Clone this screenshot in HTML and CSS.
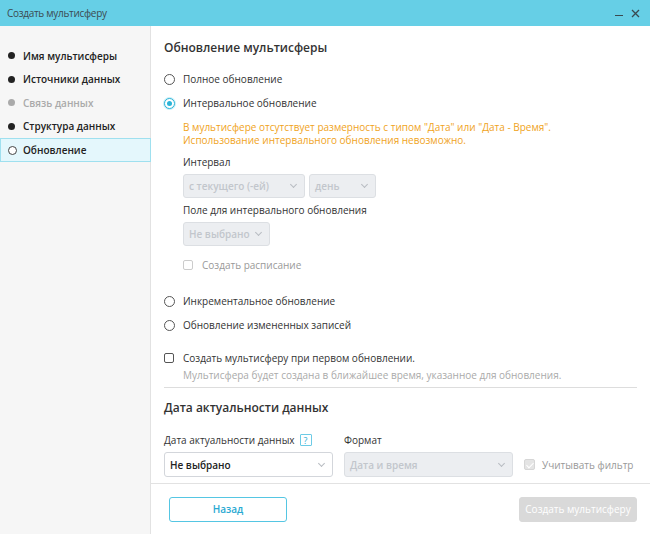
FILE: index.html
```html
<!DOCTYPE html>
<html lang="ru">
<head>
    <meta charset="UTF-8">
    <title>Создать мультисферу</title>
    <link rel="stylesheet" href="styles.css">
</head>
<body>
<div class="window">
    <div class="titlebar">
        <span class="title">Создать мультисферу</span>
        <div class="win-buttons">
            <span class="win-min"></span>
            <svg class="win-close" width="9" height="9" viewBox="0 0 9 9"><path d="M1 1L8 8M8 1L1 8" stroke="#3a4a50" stroke-width="1.3"/></svg>
        </div>
    </div>

    <div class="layout">
        <!-- Steps -->
        <ul class="steps">
            <li class="step">Имя мультисферы</li>
            <li class="step">Источники данных</li>
            <li class="step disabled">Связь данных</li>
            <li class="step">Структура данных</li>
            <li class="step active">Обновление</li>
        </ul>

        <div class="main">
            <div class="content">
                <h2>Обновление мультисферы</h2>

                <div class="radio-row"><span class="radio"></span>Полное обновление</div>
                <div class="radio-row"><span class="radio checked"></span>Интервальное обновление</div>

                <div class="sub">
                    <p class="warning">В мультисфере отсутствует размерность с типом "Дата" или "Дата - Время".<br>Использование интервального обновления невозможно.</p>

                    <div class="field-label first">Интервал</div>
                    <div class="select-row">
                        <div class="select disabled w-122">с текущего (-ей)<span class="chev"></span></div>
                        <div class="select disabled w-67">день<span class="chev"></span></div>
                    </div>

                    <div class="field-label">Поле для интервального обновления</div>
                    <div class="select disabled w-87">Не выбрано<span class="chev"></span></div>

                    <div class="check-row muted"><span class="checkbox disabled"></span>Создать расписание</div>
                </div>

                <div class="radio-row gap-top"><span class="radio"></span>Инкрементальное обновление</div>
                <div class="radio-row"><span class="radio"></span>Обновление измененных записей</div>

                <div class="check-row create"><span class="checkbox"></span>Создать мультисферу при первом обновлении.</div>
                <div class="hint">Мультисфера будет создана в ближайшее время, указанное для обновления.</div>

                <hr>

                <h2 class="second">Дата актуальности данных</h2>

                <div class="date-grid">
                    <div class="col">
                        <div class="field-label">Дата актуальности данных <span class="help">?</span></div>
                        <div class="select w-169">Не выбрано<span class="chev"></span></div>
                    </div>
                    <div class="col">
                        <div class="field-label">Формат</div>
                        <div class="select disabled w-169">Дата и время<span class="chev"></span></div>
                    </div>
                    <div class="check-row muted filter"><span class="checkbox checked-disabled"></span>Учитывать фильтр</div>
                </div>
            </div>

            <div class="footer">
                <button class="btn btn-back">Назад</button>
                <button class="btn btn-create" disabled>Создать мультисферу</button>
            </div>
        </div>
    </div>
</div>
</body>
</html>
```

FILE: styles.css
```css
* {
    box-sizing: border-box;
    margin: 0;
    padding: 0;
}

body {
    font-family: "Open Sans", "Noto Sans", sans-serif;
    font-size: 10px;
    color: #333;
    background: #fff;
}

.window {
    width: 650px;
    height: 534px;
    display: flex;
    flex-direction: column;
    overflow: hidden;
}

.titlebar {
    flex-shrink: 0;
    height: 26px;
    background: #66cfe6;
    display: flex;
    align-items: center;
    justify-content: space-between;
    padding: 0 10px 0 7px;
}

.title {
    font-size: 10px;
    letter-spacing: -0.3px;
    color: #3c4a50;
}

.win-buttons {
    display: flex;
    align-items: center;
    gap: 8px;
}

.win-min {
    width: 8px;
    height: 1px;
    background: #3a4a50;
    margin-top: 5px;
}

.layout {
    flex: 1;
    display: flex;
    min-height: 0;
}

/* Steps */
.steps {
    width: 151px;
    flex-shrink: 0;
    background: #f6f6f6;
    border-right: 1px solid #e2e2e2;
    list-style: none;
    padding-top: 18px;
}

.step {
    height: 23.5px;
    display: flex;
    align-items: center;
    padding-left: 23px;
    position: relative;
    font-weight: 600;
    color: #222;
}

.step::before {
    content: "";
    position: absolute;
    left: 8px;
    top: 50%;
    width: 7px;
    height: 7px;
    margin-top: -3.5px;
    border-radius: 50%;
    background: #222;
}

.step.disabled {
    color: #aaa;
}

.step.disabled::before {
    background: #aaa;
}

.step.active {
    background: #e4f7fc;
    border: 1px solid #9fe0ef;
    margin-right: -1px;
    padding-left: 22px;
}

.step.active::before {
    left: 7px;
    background: #fff;
    border: 1px solid #444;
}

/* Main */
.main {
    flex: 1;
    display: flex;
    flex-direction: column;
}

.content {
    flex: 1;
    padding: 12px 13px 0 13px;
}

h2 {
    font-size: 12px;
    font-weight: 600;
    line-height: 20px;
    color: #333;
}

h2.second {
    margin-top: 10px;
}

.radio-row {
    height: 24px;
    display: flex;
    align-items: center;
}

h2 + .radio-row {
    margin-top: 9px;
}

.radio-row.gap-top {
    margin-top: 16px;
}

.radio {
    width: 11px;
    height: 11px;
    border: 1px solid #555;
    border-radius: 50%;
    margin-right: 8px;
    background: #fff;
    position: relative;
}

.radio.checked {
    border-color: #2bb4d8;
    box-shadow: 0 0 0 1px #c8eef7;
}

.radio.checked::after {
    content: "";
    position: absolute;
    left: 2px;
    top: 2px;
    width: 5px;
    height: 5px;
    border-radius: 50%;
    background: #2bb4d8;
}

.sub {
    padding-left: 19px;
}

.warning {
    color: #f0a31c;
    line-height: 12.5px;
    margin-top: 6px;
}

.field-label {
    line-height: 16px;
    display: flex;
    align-items: center;
    gap: 5px;
    margin-top: 4px;
    margin-bottom: 4px;
}

.field-label.first {
    margin-top: 8px;
}

.select-row {
    display: flex;
    gap: 4px;
}

.select {
    height: 24px;
    border: 1px solid #d3d6db;
    border-radius: 3px;
    background: #fff;
    display: flex;
    align-items: center;
    justify-content: space-between;
    padding: 0 8px 0 5px;
    font-weight: 600;
    color: #222;
    white-space: nowrap;
}

.select.disabled {
    background: #eceef1;
    border-color: #dcdfe3;
    color: #c2c6cc;
}

.chev {
    width: 5px;
    height: 5px;
    border-right: 1px solid #b8bcc2;
    border-bottom: 1px solid #b8bcc2;
    transform: rotate(45deg);
    margin-top: -3px;
}

.w-122 { width: 122px; }
.w-67 { width: 67px; }
.w-87 { width: 87px; }
.w-169 { width: 169px; height: 25px; }

.check-row {
    display: flex;
    align-items: center;
    line-height: 16px;
    white-space: nowrap;
}

.sub .check-row {
    margin-top: 11px;
}

.check-row.muted {
    color: #999;
}

.checkbox {
    width: 10px;
    height: 10px;
    border: 1px solid #555;
    border-radius: 2px;
    margin-right: 9px;
    background: #fff;
}

.checkbox.disabled {
    border-color: #ccc;
    margin-right: 9px;
}

.checkbox.checked-disabled {
    width: 11px;
    height: 11px;
    border-color: #d6d6d6;
    background: #e4e4e4;
    position: relative;
}

.checkbox.checked-disabled::after {
    content: "";
    position: absolute;
    left: 3px;
    top: 1px;
    width: 3px;
    height: 6px;
    border-right: 1.5px solid #fff;
    border-bottom: 1.5px solid #fff;
    transform: rotate(45deg);
}

.check-row.create {
    margin-top: 13px;
}

.hint {
    color: #aaa;
    line-height: 16px;
    padding-left: 19px;
    margin-top: 1px;
}

hr {
    border: none;
    border-top: 1px solid #ddd;
    margin-top: 4px;
}

.help {
    display: inline-flex;
    align-items: center;
    justify-content: center;
    width: 12px;
    height: 12px;
    border: 1px solid #6ccbe6;
    border-radius: 1px;
    color: #2daed6;
    font-size: 9px;
    line-height: 1;
}

.date-grid {
    display: flex;
    align-items: flex-end;
    gap: 11px;
    margin-top: 10px;
}

.check-row.filter {
    height: 25px;
}

.check-row.filter .checkbox {
    margin-right: 7px;
}

/* Footer */
.footer {
    flex-shrink: 0;
    height: 51px;
    border-top: 1px solid #e2e2e2;
    display: flex;
    align-items: center;
    justify-content: space-between;
    padding: 0 13px 0 18px;
}

.btn {
    font-family: inherit;
    font-size: 10px;
    width: 118px;
    height: 25px;
    border-radius: 3px;
}

.btn-back {
    background: #fff;
    border: 1px solid #55c6e3;
    color: #2aa9d2;
    font-weight: 600;
}

.btn-create {
    background: #d9d9d9;
    border: 1px solid #d9d9d9;
    color: #fff;
}
```
